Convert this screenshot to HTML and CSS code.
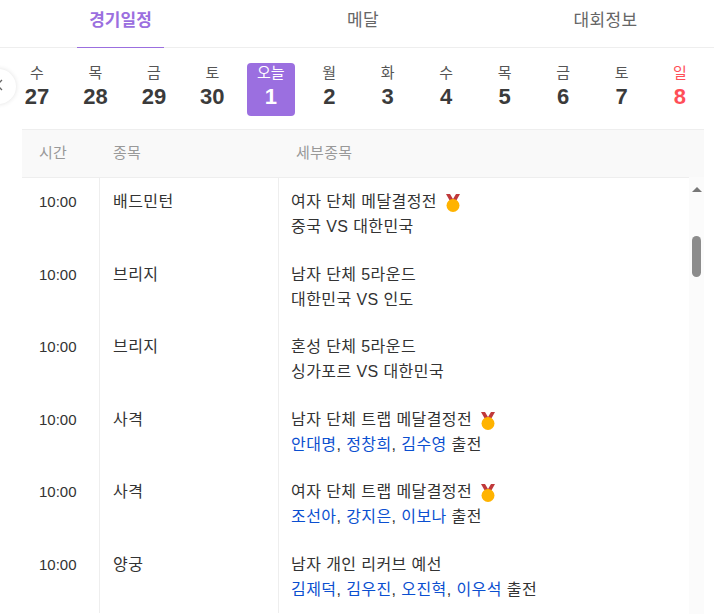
FILE: index.html
```html
<!DOCTYPE html>
<html lang="ko">
<head>
  <meta charset="UTF-8" />
  <title>경기일정</title>
  <link rel="stylesheet" href="styles.css">
</head>
<body>

  <svg class="defs" width="0" height="0">
    <symbol id="medal" viewBox="0 0 16 18">
      <path d="M1 0h4l3 5 3-5h4l-4.500 8h-5z" fill="#c0393b"/>
      <circle cx="8" cy="11.500" r="6.500" fill="#ffb300"/>
    </symbol>
  </svg>

  <nav class="tabs">
    <a class="tab active">경기일정</a>
    <a class="tab">메달</a>
    <a class="tab">대회정보</a>
  </nav>

  <div class="dates">
    <button class="prev">
      <svg width="8" height="12" viewBox="0 0 8 12"><path d="M7 1 2 6l5 5" fill="none" stroke="#666" stroke-width="1.300"/></svg>
    </button>
    <div class="date"><span>수</span><b>27</b></div>
    <div class="date"><span>목</span><b>28</b></div>
    <div class="date"><span>금</span><b>29</b></div>
    <div class="date"><span>토</span><b>30</b></div>
    <div class="date today"><span>오늘</span><b>1</b></div>
    <div class="date"><span>월</span><b>2</b></div>
    <div class="date"><span>화</span><b>3</b></div>
    <div class="date"><span>수</span><b>4</b></div>
    <div class="date"><span>목</span><b>5</b></div>
    <div class="date"><span>금</span><b>6</b></div>
    <div class="date"><span>토</span><b>7</b></div>
    <div class="date sunday"><span>일</span><b>8</b></div>
  </div>

  <section class="schedule">
    <div class="row head">
      <div class="time">시간</div>
      <div class="sport">종목</div>
      <div class="detail">세부종목</div>
    </div>

    <div class="rows">
      <div class="row">
        <div class="time">10:00</div>
        <div class="sport">배드민턴</div>
        <div class="detail">
          <p>여자 단체 메달결정전 <svg class="medal"><use href="#medal"/></svg></p>
          <p>중국 VS 대한민국</p>
        </div>
      </div>
      <div class="row">
        <div class="time">10:00</div>
        <div class="sport">브리지</div>
        <div class="detail">
          <p>남자 단체 5라운드</p>
          <p>대한민국 VS 인도</p>
        </div>
      </div>
      <div class="row">
        <div class="time">10:00</div>
        <div class="sport">브리지</div>
        <div class="detail">
          <p>혼성 단체 5라운드</p>
          <p>싱가포르 VS 대한민국</p>
        </div>
      </div>
      <div class="row">
        <div class="time">10:00</div>
        <div class="sport">사격</div>
        <div class="detail">
          <p>남자 단체 트랩 메달결정전 <svg class="medal"><use href="#medal"/></svg></p>
          <p><a>안대명</a>, <a>정창희</a>, <a>김수영</a> 출전</p>
        </div>
      </div>
      <div class="row">
        <div class="time">10:00</div>
        <div class="sport">사격</div>
        <div class="detail">
          <p>여자 단체 트랩 메달결정전 <svg class="medal"><use href="#medal"/></svg></p>
          <p><a>조선아</a>, <a>강지은</a>, <a>이보나</a> 출전</p>
        </div>
      </div>
      <div class="row">
        <div class="time">10:00</div>
        <div class="sport">양궁</div>
        <div class="detail">
          <p>남자 개인 리커브 예선</p>
          <p><a>김제덕</a>, <a>김우진</a>, <a>오진혁</a>, <a>이우석</a> 출전</p>
        </div>
      </div>
    </div>

    <div class="scrollbar">
      <i class="arrow"></i>
      <i class="thumb"></i>
    </div>
  </section>

</body>
</html>
```

FILE: styles.css
```css
html, body {
  height: 100%;
  overflow: hidden;
}

body {
  margin: 0;
  font-family: "Liberation Sans", "Noto Sans CJK KR", sans-serif;
  font-size: 15px;
  color: #333;
  background: white;
}

.defs {
  display: block;
}

.tabs {
  display: flex;
  gap: 155.500px;
  height: 47px;
  padding-left: 77px;
  border-bottom: 1px solid #eee;
}

.tab {
  flex: none;
  width: 87px;
  height: 47px;
  text-align: center;
  line-height: 41px;
  color: #666;
  font-size: 17px;
  letter-spacing: 0.300px;
}

.tab.active {
  color: #9b6fdf;
  font-weight: bold;
  letter-spacing: 0;
  border-bottom: 1px solid #9b6fdf;
}

.dates {
  position: relative;
  display: flex;
  justify-content: space-between;
  height: 53px;
  padding: 15px 10px 13px 13px;
  overflow: hidden;
}

.prev {
  position: absolute;
  left: -19px;
  top: 21px;
  width: 35px;
  height: 35px;
  padding: 0;
  border: none;
  border-radius: 50%;
  background: white;
  box-shadow: 0 0 5px rgba(0, 0, 0, 0.12);
}

.date {
  display: flex;
  flex-direction: column;
  align-items: center;
  width: 48px;
  height: 53px;
  border-radius: 4px;
  line-height: 20px;
  font-size: 15px;
  color: #555;
}

.date b {
  font-size: 22px;
  line-height: 28px;
  color: #3b3b3b;
}

.date.today {
  background: #9b6fe0;
}

.date.today span, .date.today b {
  color: white;
}

.date.sunday span, .date.sunday b {
  color: #ff4e57;
}

.schedule {
  position: relative;
  margin: 0 10px 0 22px;
}

.row {
  display: flex;
  height: 72.500px;
}

.head {
  height: 47px;
  line-height: 45px;
  background: #f9f9f9;
  border-top: 1px solid #eee;
  border-bottom: 1px solid #eee;
  color: #999;
  font-size: 15px;
  letter-spacing: 0.300px;
}

.time, .sport, .detail {
  box-sizing: border-box;
}

.time {
  width: 78px;
  padding-left: 17px;
}

.sport {
  width: 179px;
  padding-left: 13px;
}

.detail {
  flex: 1;
  padding-left: 12px;
}

.head .detail {
  padding-left: 17px;
}

.rows .row > div {
  padding-top: 11px;
  line-height: 25px;
}

.rows .sport, .rows .detail {
  font-size: 16px;
  letter-spacing: 0.420px;
}

.rows .time, .rows .sport {
  border-right: 1px solid #eee;
}

p {
  margin: 0;
}

.detail a {
  color: #0b4fd0;
}

.medal {
  width: 16px;
  height: 18px;
  margin-left: 3px;
  vertical-align: -5px;
}

.scrollbar {
  position: absolute;
  top: 48px;
  right: 0;
  width: 15px;
  height: 440px;
  background: #fbfbfb;
}

.arrow {
  position: absolute;
  left: 3px;
  top: 10px;
  border-left: 5px solid transparent;
  border-right: 5px solid transparent;
  border-bottom: 5px solid #777;
}

.thumb {
  position: absolute;
  left: 3px;
  top: 59px;
  width: 9px;
  height: 41px;
  border-radius: 5px;
  background: #8c8c8c;
}
```
